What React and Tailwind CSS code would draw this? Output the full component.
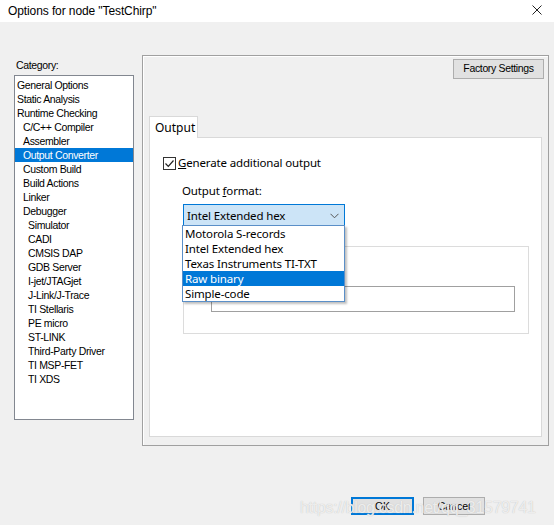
import {useState} from 'react'

const categories = [
    {label: 'General Options', level: 0},
    {label: 'Static Analysis', level: 0},
    {label: 'Runtime Checking', level: 0},
    {label: 'C/C++ Compiler', level: 1},
    {label: 'Assembler', level: 1},
    {label: 'Output Converter', level: 1},
    {label: 'Custom Build', level: 1},
    {label: 'Build Actions', level: 1},
    {label: 'Linker', level: 1},
    {label: 'Debugger', level: 1},
    {label: 'Simulator', level: 2},
    {label: 'CADI', level: 2},
    {label: 'CMSIS DAP', level: 2},
    {label: 'GDB Server', level: 2},
    {label: 'I-jet/JTAGjet', level: 2},
    {label: 'J-Link/J-Trace', level: 2},
    {label: 'TI Stellaris', level: 2},
    {label: 'PE micro', level: 2},
    {label: 'ST-LINK', level: 2},
    {label: 'Third-Party Driver', level: 2},
    {label: 'TI MSP-FET', level: 2},
    {label: 'TI XDS', level: 2}
]

const formats = ['Motorola S-records', 'Intel Extended hex', 'Texas Instruments TI-TXT', 'Raw binary', 'Simple-code']

const indent = ['pl-[2px]', 'pl-[8px]', 'pl-[13px]']

const App = () => {
    const [selected, setSelected] = useState('Output Converter')
    const [hovered, setHovered] = useState('Raw binary')
    const [checked, setChecked] = useState(true)

    return (
        <div className="relative w-[554px] h-[525px] bg-[#f0f0f0] text-black overflow-hidden font-['Liberation_Sans',Arial,sans-serif]">
            {/* title bar */}
            <div className="h-[22px] bg-white flex items-center justify-between pl-[8px] pr-[12px]">
                <span className="text-[12px] tracking-[-0.1px]">Options for node "TestChirp"</span>
                <svg width="10" height="10" viewBox="0 0 10 10" className="mt-[-2px]">
                    <path d="M0.5 0.5L9.5 9.5M9.5 0.5L0.5 9.5" stroke="#222" strokeWidth="1"/>
                </svg>
            </div>

            <div className="flex pt-[33px] pl-[14px]">
                {/* category column */}
                <div className="w-[120px] text-[10.5px] tracking-[-0.35px]">
                    <div className="h-[20px] leading-[20px] pl-[2px]">Category:</div>
                    <div className="h-[345px] border border-[#828790] bg-white pt-[2px]">
                        {categories.map(c => (
                            <div
                                key={c.label}
                                onClick={() => setSelected(c.label)}
                                className={`h-[14px] leading-[14px] whitespace-nowrap ${indent[c.level]} ${selected === c.label ? 'bg-[#0078d7] text-white' : ''}`}
                            >
                                {c.label}
                            </div>
                        ))}
                    </div>
                </div>

                {/* options panel */}
                <div className="ml-[8px] w-[407px] h-[391px] border border-[#a0a0a0] shadow-[inset_1px_1px_0_#ffffff]">
                    <div className="flex justify-end pt-[3px] pr-[4px]">
                        <button className="w-[91px] h-[20px] bg-[#e1e1e1] border border-[#adadad] text-[10.5px] tracking-[-0.35px]">
                            Factory Settings
                        </button>
                    </div>

                    <div className="pl-[6px] pt-[37px]">
                        <div className="relative z-10 w-[49px] h-[22px] -mb-px bg-white border border-b-0 border-[#d9d9d9] text-[12px] leading-[21px] pl-[5px] font-['Noto_Sans',sans-serif]">
                            Output
                        </div>
                        <div className="relative w-[393px] h-[300px] bg-white border border-[#d9d9d9] font-['Noto_Sans',sans-serif] text-[11.5px] tracking-[-0.15px]">
                            <label className="flex items-center gap-[2px] pl-[13px] pt-[18px] cursor-default" onClick={() => setChecked(!checked)}>
                                <span className="w-[13px] h-[13px] border border-[#333] bg-white flex items-center justify-center">
                                    {checked && (
                                        <svg width="11" height="11" viewBox="0 0 11 11">
                                            <path d="M1.5 5.5L4.3 8.3L9.5 2.5" fill="none" stroke="#222" strokeWidth="1.2"/>
                                        </svg>
                                    )}
                                </span>
                                <span className="leading-[14px]"><span className="underline">G</span>enerate additional output</span>
                            </label>

                            <div className="pl-[32px] pt-[13px] leading-[16px]">
                                Output <span className="underline">f</span>ormat:
                            </div>

                            <div className="ml-[33px] mt-[5px] w-[162px] h-[23px] bg-[#cce4f7] border border-[#0078d7] flex items-center justify-between pl-[3px] pr-[5px]">
                                <span>Intel Extended hex</span>
                                <svg width="9" height="6" viewBox="0 0 9 6">
                                    <path d="M0.5 0.8L4.5 4.8L8.5 0.8" fill="none" stroke="#555" strokeWidth="1"/>
                                </svg>
                            </div>

                            {/* group box behind the dropdown */}
                            <div className="ml-[33px] mt-[19px] w-[346px] h-[88px] border border-[#dcdcdc] pt-[39px] pl-[27px]">
                                <div className="w-[304px] h-[26px] border border-[#a0a0a0] bg-white"/>
                            </div>

                            {/* open dropdown list */}
                            <div className="absolute left-[32px] top-[87px] w-[163px] h-[77px] bg-white border border-[#5a8fc8] shadow-[2px_2px_2px_rgba(0,0,0,0.25)]">
                                {formats.map(f => (
                                    <div
                                        key={f}
                                        onMouseEnter={() => setHovered(f)}
                                        className={`h-[15px] leading-[15px] pl-[2px] whitespace-nowrap ${hovered === f ? 'bg-[#0078d7] text-white' : ''}`}
                                    >
                                        {f}
                                    </div>
                                ))}
                            </div>
                        </div>
                    </div>
                </div>
            </div>

            {/* dialog buttons */}
            <div className="flex pl-[351px] pt-[51px] gap-[9px] text-[10.5px]">
                <button className="w-[63px] h-[18px] bg-[#e1e1e1] border-2 border-[#0078d7] leading-[14px]">OK</button>
                <button className="w-[62px] h-[18px] bg-[#e1e1e1] border border-[#adadad] leading-[16px]">Cancel</button>
            </div>

            {/* watermark */}
            <div className="absolute left-[300px] top-[496px] text-[16px] tracking-[-0.3px] text-[#fafafa]/80 [text-shadow:0_0_1px_#b8b8b8] pointer-events-none whitespace-nowrap">
                https://blog.csdn.net/qq_31579741
            </div>
        </div>
    )
}

export default App
